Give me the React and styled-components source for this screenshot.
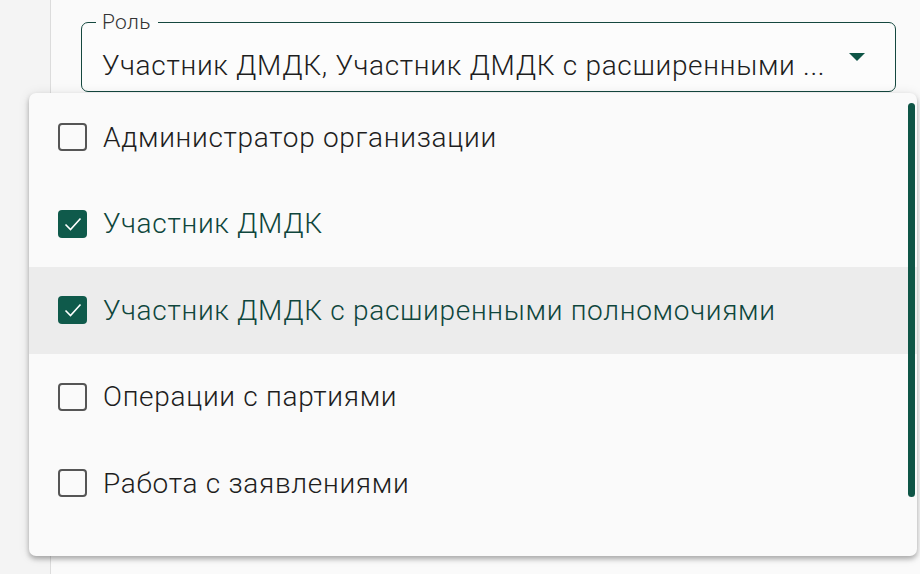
import styled, { createGlobalStyle } from "styled-components";

const roles = [
  { label: "Администратор организации", checked: false },
  { label: "Участник ДМДК", checked: true },
  { label: "Участник ДМДК с расширенными полномочиями", checked: true, hover: true },
  { label: "Операции с партиями", checked: false },
  { label: "Работа с заявлениями", checked: false },
];

const GREEN = "#0e5546";

const App = () => {
  return (
    <StPage>
      <GlobalStyle />
      <StRail />
      <StMain>
        <StField>
          <StLegend>Роль</StLegend>
          <StRow>
            <StValue>Участник ДМДК, Участник ДМДК с расширенными ...</StValue>
            <StArrow viewBox="0 0 16 8">
              <path d="M0 0 L16 0 L8 8 Z" fill={GREEN} />
            </StArrow>
          </StRow>
        </StField>
      </StMain>
      <StMenu>
        {roles.map((role) => (
          <StItem key={role.label} hover={role.hover}>
            <StBox checked={role.checked}>
              {role.checked && (
                <svg width="22" height="22" viewBox="0 0 22 22">
                  <path
                    d="M3.5 11.5 L8.5 16.5 L18.5 5.5"
                    fill="none"
                    stroke="#fff"
                    strokeWidth="1.6"
                  />
                </svg>
              )}
            </StBox>
            <StLabel checked={role.checked}>{role.label}</StLabel>
          </StItem>
        ))}
        <StScroll />
      </StMenu>
    </StPage>
  );
};

export default App;

const GlobalStyle = createGlobalStyle`
  html, body {
    margin: 0;
    padding: 0;
    background: #f8f8f8;
  }
  body {
    font-family: Roboto, "Liberation Sans", sans-serif;
  }
`;

const StPage = styled.div`
  position: relative;
  display: flex;
  width: 920px;
  height: 574px;
  overflow: hidden;
  background: #f8f8f8;
`;

const StRail = styled.div`
  width: 50px;
  flex-shrink: 0;
  background: #f4f4f4;
  border-right: 1.5px solid #dcdcdc;
`;

const StMain = styled.div`
  flex: 1;
  padding: 11px 0 0 30px;
  background: #fafafa;
`;

const StField = styled.fieldset`
  box-sizing: border-box;
  width: 815px;
  height: 81px;
  margin: 0;
  padding: 0 30px 0 20px;
  border: 1.5px solid #15483f;
  border-radius: 7px;
  background: #fcfcfc;
`;

const StLegend = styled.legend`
  padding: 0 7px 0 6px;
  margin-left: -6px;
  font-size: 21px;
  line-height: 22px;
  font-weight: 300;
  letter-spacing: 0.3px;
  color: #333;
`;

const StRow = styled.div`
  display: flex;
  align-items: center;
  justify-content: space-between;
  height: 36px;
  margin-top: 14px;
`;

const StValue = styled.div`
  font-size: 28px;
  font-weight: 300;
  color: #1e1e1e;
  white-space: nowrap;
  letter-spacing: 0.7px;
`;

const StArrow = styled.svg`
  width: 16px;
  height: 8px;
  margin-bottom: 16px;
`;

const StMenu = styled.div`
  position: absolute;
  left: 29px;
  top: 93px;
  width: 888px;
  height: 463px;
  box-sizing: border-box;
  padding-top: 1px;
  background: #fafafa;
  border-radius: 7px;
  box-shadow: 0 3px 5px rgba(0, 0, 0, 0.28), 0 1px 12px rgba(0, 0, 0, 0.1);
`;

const StItem = styled.div`
  display: flex;
  align-items: center;
  height: 86.5px;
  padding-left: 29px;
  background: ${(props) => (props.hover ? "#ececec" : "transparent")};
`;

const StBox = styled.div`
  box-sizing: border-box;
  width: 29px;
  height: 28px;
  border-radius: 4px;
  display: flex;
  align-items: center;
  justify-content: center;
  border: ${(props) => (props.checked ? "none" : "2px solid #555")};
  background: ${(props) => (props.checked ? "#0f5a4b" : "transparent")};
`;

const StLabel = styled.span`
  margin-left: 16px;
  font-size: 28px;
  font-weight: 300;
  letter-spacing: 0.7px;
  color: ${(props) => (props.checked ? "#0f463c" : "#1e1e1e")};
`;

const StScroll = styled.div`
  position: absolute;
  right: 2px;
  top: 10px;
  width: 7px;
  height: 394px;
  border-radius: 4px;
  background: ${GREEN};
`;
